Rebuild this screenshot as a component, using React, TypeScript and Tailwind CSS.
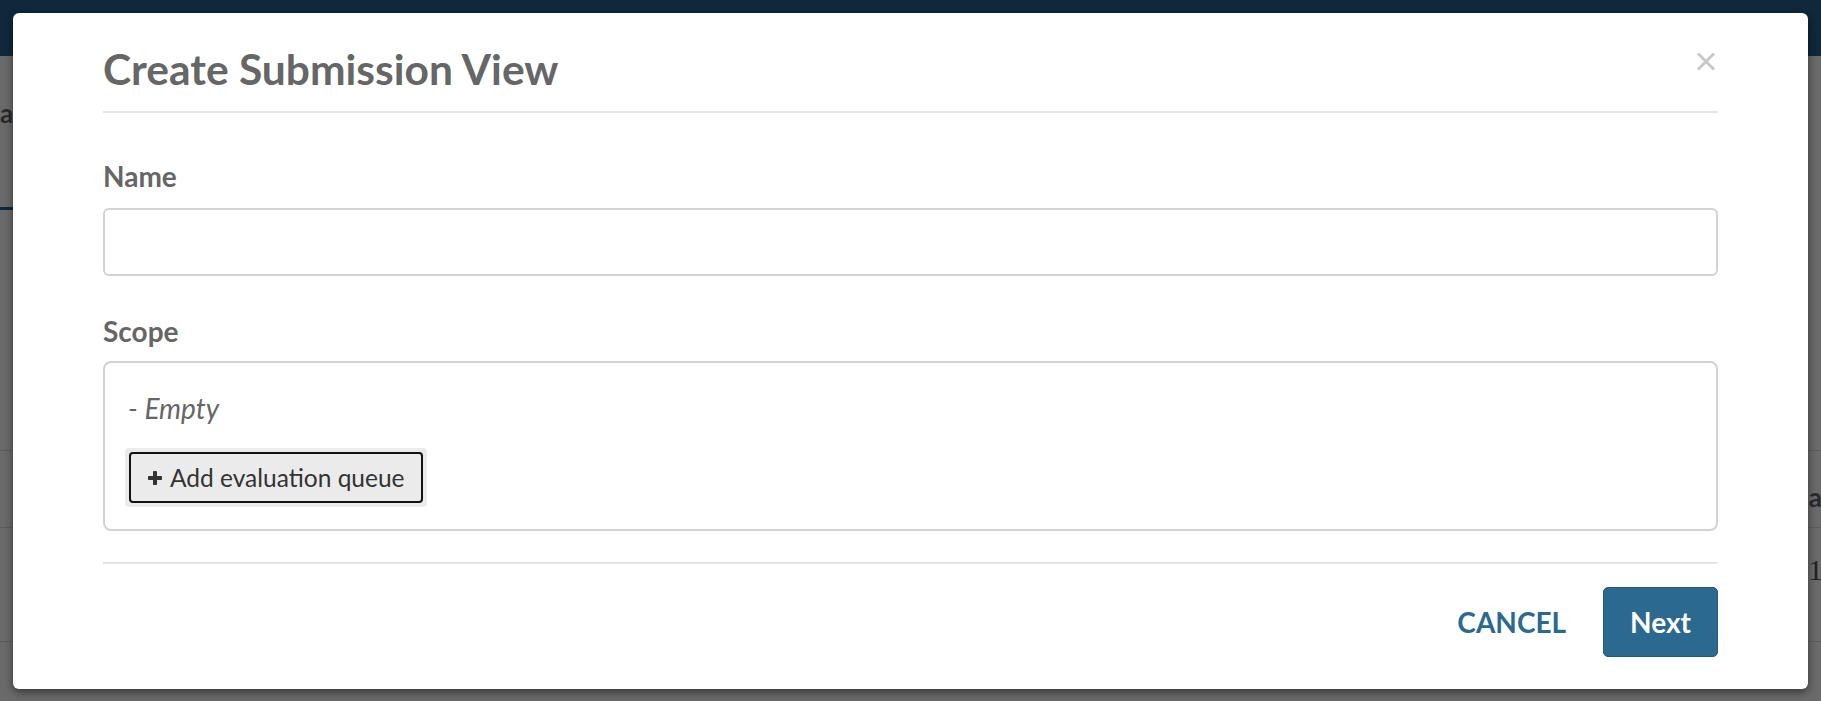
import React from 'react';

const PlusIcon: React.FC = () => (
  <svg width="14" height="14" viewBox="0 0 14 14" className="shrink-0">
    <rect x="5" y="0" width="4" height="14" rx="0.7" fill="#333" />
    <rect x="0" y="5" width="14" height="4" rx="0.7" fill="#333" />
  </svg>
);

const CloseIcon: React.FC = () => (
  <svg width="18" height="19" viewBox="0 0 18 19">
    <path d="M2 2.5 L16 16.5 M16 2.5 L2 16.5" stroke="#c8c8c8" strokeWidth="3" strokeLinecap="square" />
  </svg>
);

const App: React.FC = () => {
  return (
    <div className="relative h-[701px] w-[1821px] overflow-hidden bg-[#6a6a6a] font-[Lato,sans-serif]">
      {/* page behind the dialog */}
      <div className="h-[56px] bg-[#0f283c]" />
      <div className="flex h-[154px] flex-col justify-between">
        <div className="pt-[42px] text-[26px] font-bold leading-[30px] text-[#2a2a2a]">a</div>
        <div className="h-[3px] w-[60px] bg-[#0c2a40]" />
      </div>
      <div className="h-[241px] border-b border-[#5c5c5c]" />
      <div className="flex h-[77px] items-center justify-end border-b border-[#5c5c5c]">
        <span className="-mr-[1px] pt-[16px] text-[26px] font-bold text-[#2a2a2a]">a</span>
      </div>
      <div className="flex h-[114px] items-start justify-end border-b border-[#5c5c5c]">
        <span className="-mr-[2px] pt-[22px] font-['Liberation_Serif',serif] text-[30px] leading-[40px] text-[#222]">1</span>
      </div>

      {/* dialog */}
      <div className="absolute left-[13px] top-[13px] flex h-[676px] w-[1795px] flex-col rounded-[6px] bg-white px-[90px] shadow-[0_3px_9px_rgba(0,0,0,0.5)]">
        <div className="flex h-[100px] shrink-0 items-start justify-between border-b-2 border-[#e5e5e5]">
          <h4 className="pt-[32px] text-[42.5px] font-bold leading-[48px] text-[#666]">Create Submission View</h4>
          <button className="mr-[3px] mt-[39px]">
            <CloseIcon />
          </button>
        </div>

        <label className="mt-[46px] block text-[28px] font-bold leading-[34px] text-[#666]">Name</label>
        <input
          type="text"
          className="mt-[15px] h-[68px] w-full shrink-0 rounded-[6px] border-2 border-[#d2d2d2] px-4 text-[24px] outline-none"
        />

        <label className="mt-[38px] block text-[28px] font-bold leading-[34px] text-[#666]">Scope</label>
        <div className="mt-[13px] flex h-[170px] shrink-0 flex-col items-start rounded-[8px] border-2 border-[#d2d2d2] pl-[20px] pt-[28px]">
          <p className="ml-[3px] text-[28px] italic leading-[34px] text-[#666]">- Empty</p>
          <div className="mt-[23px] rounded-[4px] bg-[#ebebeb] p-[4px]">
            <button className="flex h-[51px] w-[294px] items-center gap-[8px] rounded-[4px] border-2 border-[#111] bg-[#ebebeb] pl-[17px] text-[24.5px] leading-[30px] text-[#333]">
              <PlusIcon />
              <span>Add evaluation queue</span>
            </button>
          </div>
        </div>

        <div className="mt-[31px] flex items-center justify-end border-t-2 border-[#e5e5e5] pt-[23px]">
          <button className="mr-[37px] text-[28px] font-bold leading-[34px] text-[#2b6990]">CANCEL</button>
          <button className="h-[70px] rounded-[5px] border border-[#235a7d] bg-[#2b6990] px-[26px] text-[28px] font-bold text-white">
            Next
          </button>
        </div>
      </div>
    </div>
  );
};

export default App;
